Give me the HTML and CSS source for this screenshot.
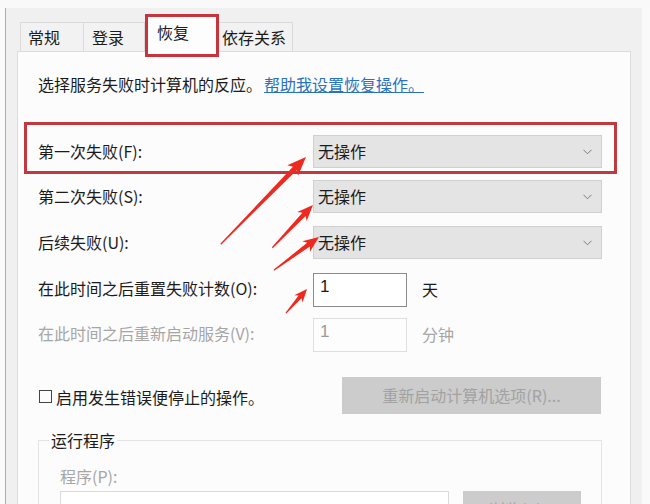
FILE: index.html
```html
<!DOCTYPE html>
<html lang="zh-CN">
<head>
<meta charset="utf-8">
<title>恢复</title>
<link rel="stylesheet" href="styles.css">
</head>
<body>
<div class="topband"></div>
<div class="frame">
  <div class="tabs">
    <div class="tab tab-1">常规</div>
    <div class="tab tab-2">登录</div>
    <div class="tab tab-active">恢复</div>
    <div class="tab tab-4">依存关系</div>
  </div>
  <div class="panel">
    <div class="desc">选择服务失败时计算机的反应。<a class="link" href="#">帮助我设置恢复操作。</a></div>

    <div class="row row-hl">
      <div class="label">第一次失败(F):</div>
      <div class="combo"><span>无操作</span><svg class="chev" width="9" height="6" viewBox="0 0 9 6"><polyline points="0.5,0.8 4.5,4.8 8.5,0.8" fill="none" stroke="#7a7a7a" stroke-width="1"/></svg></div>
    </div>

    <div class="row row-2">
      <div class="label">第二次失败(S):</div>
      <div class="combo"><span>无操作</span><svg class="chev" width="9" height="6" viewBox="0 0 9 6"><polyline points="0.5,0.8 4.5,4.8 8.5,0.8" fill="none" stroke="#7a7a7a" stroke-width="1"/></svg></div>
    </div>

    <div class="row row-3">
      <div class="label">后续失败(U):</div>
      <div class="combo"><span>无操作</span><svg class="chev" width="9" height="6" viewBox="0 0 9 6"><polyline points="0.5,0.8 4.5,4.8 8.5,0.8" fill="none" stroke="#7a7a7a" stroke-width="1"/></svg></div>
    </div>

    <div class="row row-4">
      <div class="label label-tb">在此时间之后重置失败计数(O):</div>
      <div class="tbox">1</div>
      <div class="unit">天</div>
    </div>

    <div class="row row-5 disabled">
      <div class="label label-tb">在此时间之后重新启动服务(V):</div>
      <div class="tbox tbox-dis">1</div>
      <div class="unit">分钟</div>
    </div>

    <div class="row row-6">
      <div class="check"><span class="box"></span>启用发生错误便停止的操作。</div>
      <div class="btn btn-restart">重新启动计算机选项(R)...</div>
    </div>

    <fieldset class="group">
      <legend>运行程序</legend>
      <div class="group-inner">
        <div class="prog-label">程序(P):</div>
        <div class="prog-row">
          <div class="prog-input"></div>
          <div class="btn btn-browse">浏览(B)...</div>
        </div>
      </div>
    </fieldset>
  </div>
</div>

<svg class="arrows" width="650" height="504" viewBox="0 0 650 504">
  <g fill="#ee2a20">
    <polygon transform="translate(306 157) rotate(-45.66)" points="0,0 -19,-7.5 -16,-2.6 -122,-0.6 -122,0.6 -16,2.6 -19,7.5"/>
    <polygon transform="translate(313 205) rotate(-46.4)" points="0,0 -16,-6.5 -13,-2.3 -59,-0.6 -59,0.6 -13,2.3 -16,6.5"/>
    <polygon transform="translate(319 237) rotate(-36.3)" points="0,0 -16,-6.5 -13,-2.3 -56,-0.6 -56,0.6 -13,2.3 -16,6.5"/>
    <polygon transform="translate(307 289) rotate(-48.8)" points="0,0 -13,-5.5 -10.5,-2 -32,-0.5 -32,0.5 -10.5,2 -13,5.5"/>
  </g>
</svg>
</body>
</html>
```

FILE: styles.css
```css
html, body {
  margin: 0;
  padding: 0;
}
body {
  width: 650px;
  height: 504px;
  overflow: hidden;
  background: #fafafa;
  font-family: "Noto Sans CJK SC", "Microsoft YaHei", "Noto Sans", sans-serif;
  font-size: 16px;
  color: #1b1b1b;
  position: relative;
}
.topband {
  height: 8px;
  background: #f9f9fa;
}
.frame {
  margin-left: 5px;
  width: 637px;
  height: 496px;
  box-sizing: border-box;
  border-left: 1px solid #9fb0c2;
  background: #f0f0f0;
  overflow: hidden;
}
.tabs {
  display: flex;
  align-items: flex-start;
  height: 43px;
  padding-left: 14px;
}
.tab {
  box-sizing: border-box;
  height: 29px;
  margin-top: 14px;
  line-height: 28px;
  background: #f2f2f2;
  border: 1px solid #dadada;
  border-bottom: none;
  white-space: nowrap;
}
.tab-1 {
  width: 64px;
  padding-left: 7px;
}
.tab-2 {
  width: 61px;
  padding-left: 8px;
  border-left: none;
}
.tab-active {
  position: relative;
  z-index: 2;
  width: 74px;
  height: 43px;
  margin-top: 6px;
  border: 3px solid #c6343c;
  background: #fdfdfd;
  padding: 3px 0 0 9px;
  line-height: 24px;
}
.tab-4 {
  width: 74px;
  padding-left: 3px;
  border-left: none;
}
.panel {
  margin-left: 11px;
  width: 614px;
  height: 470px;
  box-sizing: border-box;
  border: 1px solid #dcdcdc;
  background: #fcfcfc;
  padding-left: 20px;
}
.desc {
  padding-top: 20px;
  line-height: 24px;
  white-space: nowrap;
}
.link {
  color: #2a72c0;
  text-decoration: underline;
  margin-left: 2px;
}
.row {
  display: flex;
  align-items: flex-start;
  white-space: nowrap;
}
.label {
  width: 275px;
  flex: none;
  line-height: 33px;
}
.row-hl {
  box-sizing: border-box;
  margin-top: 26px;
  margin-left: -14px;
  width: 593px;
  height: 52px;
  border: 3px solid #c0393f;
  padding: 10px 0 0 11px;
}
.row-2 { margin-top: 6px; }
.row-3 { margin-top: 13px; }
.row-4 { margin-top: 14px; }
.row-5 { margin-top: 11px; }
.row-6 { margin-top: 25px; align-items: center; }
.combo {
  box-sizing: border-box;
  width: 289px;
  height: 33px;
  background: #e4e4e4;
  border: 1px solid #d0d0d0;
  display: flex;
  align-items: center;
  padding: 0 9px 0 4px;
  line-height: 31px;
}
.combo span {
  flex: 1;
}
.chev {
  display: block;
}
.label-tb {
  line-height: 30px;
}
.tbox {
  box-sizing: border-box;
  width: 94px;
  height: 34px;
  border: 1px solid #8a8a8a;
  background: #ffffff;
  padding-left: 6px;
  line-height: 26px;
  font-family: "Liberation Sans", "Noto Sans", sans-serif;
  font-size: 17px;
}
.tbox-dis {
  border-color: #dedede;
  background: #fdfdfd;
}
.unit {
  margin-left: 15px;
  line-height: 32px;
}
.disabled {
  color: #a6a6a6;
}
.disabled .tbox {
  color: #9a9a9a;
}
.check {
  width: 304px;
  flex: none;
  display: flex;
  align-items: center;
  line-height: 24px;
  padding-top: 2px;
}
.box {
  display: inline-block;
  width: 11px;
  height: 11px;
  border: 1px solid #444;
  margin: 0 4px 0 1px;
}
.btn {
  box-sizing: border-box;
  background: #cccccc;
  color: #a2a2a2;
  text-align: center;
  white-space: nowrap;
}
.btn-restart {
  width: 259px;
  height: 37px;
  line-height: 37px;
}
.group {
  box-sizing: border-box;
  margin: 16px 0 0 0;
  width: 564px;
  border: 1px solid #e3e3e3;
  padding: 0 0 30px 0;
  min-width: 0;
}
.group legend {
  margin-left: 10px;
  padding: 0 2px;
  line-height: 20px;
  color: #1b1b1b;
}
.group-inner {
  margin-left: 21px;
}
.prog-label {
  margin-top: 14px;
  line-height: 24px;
  color: #a6a6a6;
}
.prog-row {
  display: flex;
  margin-top: 3px;
}
.prog-input {
  box-sizing: border-box;
  width: 389px;
  height: 36px;
  border: 1px solid #dadada;
  background: #ffffff;
}
.btn-browse {
  margin-left: 14px;
  width: 118px;
  height: 36px;
  line-height: 36px;
}
.arrows {
  position: absolute;
  left: 0;
  top: 0;
  z-index: 5;
  pointer-events: none;
}
```
